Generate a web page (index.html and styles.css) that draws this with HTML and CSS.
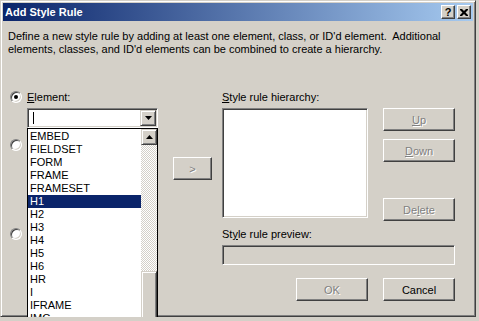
FILE: index.html
```html
<!DOCTYPE html>
<html lang="en">

<head>
    <meta charset="UTF-8">
    <meta name="viewport" content="width=device-width, initial-scale=1.0">
    <title>Add Style Rule</title>
    <link rel="stylesheet" href="styles.css">
</head>

<body>
    <div class="window">
        <div class="titlebar">
            <span class="title">Add Style Rule</span>
            <div class="caption-buttons">
                <button class="caption-btn help">?</button>
                <button class="caption-btn close">
                    <svg width="8" height="7" viewBox="0 0 8 7"><path d="M0 0h2l2 2 2-2h2v1l-2.5 2.5 2.5 2.5v1h-2l-2-2-2 2h-2v-1l2.5-2.5-2.5-2.5z" fill="#000"/></svg>
                </button>
            </div>
        </div>

        <div class="client">
            <p class="intro">Define a new style rule by adding at least one element, class, or ID'd element.&nbsp; Additional<br>elements, classes, and ID'd elements can be combined to create a hierarchy.</p>

            <div class="main">
                <div class="left-col">
                    <label class="radio-row">
                        <span class="radio checked"></span>
                        <span><u>E</u>lement:</span>
                    </label>
                    <div class="combo">
                        <span class="caret"></span>
                        <span class="combo-btn">
                            <svg width="7" height="4" viewBox="0 0 7 4"><polygon points="0,0 7,0 3.5,4" fill="#000"/></svg>
                        </span>
                    </div>

                    <!-- class and id rows sit under the open list -->
                    <div class="radio-row class-row">
                        <span class="radio"></span>
                    </div>
                    <div class="combo"></div>

                    <div class="radio-row id-row">
                        <span class="radio"></span>
                    </div>
                    <div class="combo"></div>

                    <!-- open drop-down of the Element combo -->
                    <div class="dropdown">
                        <ul class="options">
                            <li>EMBED</li>
                            <li>FIELDSET</li>
                            <li>FORM</li>
                            <li>FRAME</li>
                            <li>FRAMESET</li>
                            <li class="selected">H1</li>
                            <li>H2</li>
                            <li>H3</li>
                            <li>H4</li>
                            <li>H5</li>
                            <li>H6</li>
                            <li>HR</li>
                            <li>I</li>
                            <li>IFRAME</li>
                            <li>IMG</li>
                        </ul>
                        <div class="scrollbar">
                            <span class="scroll-btn">
                                <svg width="7" height="4" viewBox="0 0 7 4"><polygon points="3.5,0 7,4 0,4" fill="#000"/></svg>
                            </span>
                            <span class="track"></span>
                            <span class="thumb"></span>
                        </div>
                    </div>
                </div>

                <div class="mid-col">
                    <button class="btn add-btn" disabled>&gt;</button>
                </div>

                <div class="right-col">
                    <div class="label"><u>S</u>tyle rule hierarchy:</div>
                    <div class="hier-row">
                        <div class="listbox"></div>
                        <div class="side-buttons">
                            <button class="btn" disabled><u>U</u>p</button>
                            <button class="btn" disabled><u>D</u>own</button>
                            <button class="btn delete-btn" disabled>De<u>l</u>ete</button>
                        </div>
                    </div>
                    <div class="label preview-label">St<u>y</u>le rule preview:</div>
                    <div class="preview"></div>
                    <div class="footer">
                        <button class="btn" disabled>OK</button>
                        <button class="btn enabled">Cancel</button>
                    </div>
                </div>
            </div>
        </div>
    </div>
</body>

</html>
```

FILE: styles.css
```css
* {
    margin: 0;
    padding: 0;
    box-sizing: border-box;
}

body {
    background-color: #d4d0c8;
    font-family: "Liberation Sans", Arial, sans-serif;
    font-size: 11px;
    line-height: 13px;
    color: #000;
    overflow: hidden;
}

.window {
    position: relative;
    width: 476px;
    height: 317px;
    padding: 2px;
    background-color: #d4d0c8;
    border: 1px solid;
    border-color: #d4d0c8 #404040 #404040 #d4d0c8;
    box-shadow: inset 1px 1px #fff, inset -1px -1px #808080;
}

/* title bar */
.titlebar {
    display: flex;
    align-items: center;
    height: 18px;
    padding: 0 2px;
    background: linear-gradient(to right, #0a246a, #a6caf0);
}

.title {
    flex: 1;
    color: #fff;
    font-weight: bold;
    line-height: 18px;
}

.caption-buttons {
    display: flex;
    gap: 2px;
}

.caption-btn {
    display: flex;
    align-items: center;
    justify-content: center;
    width: 14px;
    height: 14px;
    background-color: #d4d0c8;
    border: 1px solid;
    border-color: #fff #404040 #404040 #fff;
    box-shadow: inset -1px -1px #808080;
    font-family: "Liberation Sans", Arial, sans-serif;
    font-size: 11px;
    font-weight: bold;
    line-height: 12px;
}

/* client area */
.client {
    padding: 9px 0 0 5px;
}

.intro {
    margin-bottom: 35px;
}

.main {
    display: flex;
    padding-left: 2px;
}

.left-col {
    position: relative;
    width: 148px;
}

.radio-row {
    display: flex;
    gap: 5px;
    height: 13px;
}

.radio {
    position: relative;
    width: 12px;
    height: 12px;
    border-radius: 50%;
    background-color: #fff;
    border: 1px solid;
    border-color: #808080 #fff #fff #808080;
    box-shadow: inset 1px 1px #404040, inset -1px -1px #d4d0c8;
}

.radio.checked::after {
    content: "";
    position: absolute;
    left: 3px;
    top: 3px;
    width: 4px;
    height: 4px;
    border-radius: 50%;
    background-color: #000;
}

.combo {
    display: flex;
    align-items: center;
    justify-content: space-between;
    width: 131px;
    height: 20px;
    margin: 4px 0 0 17px;
    background-color: #fff;
    border: 1px solid;
    border-color: #808080 #fff #fff #808080;
    box-shadow: inset 1px 1px #404040, inset -1px -1px #d4d0c8;
    padding: 1px;
}

.caret {
    width: 1px;
    height: 12px;
    margin-left: 4px;
    background-color: #000;
}

.combo-btn,
.scroll-btn {
    display: flex;
    align-items: center;
    justify-content: center;
    width: 16px;
    height: 16px;
    background-color: #d4d0c8;
    border: 1px solid;
    border-color: #d4d0c8 #404040 #404040 #d4d0c8;
    box-shadow: inset 1px 1px #fff, inset -1px -1px #808080;
}

.class-row {
    margin-top: 11px;
}

.id-row {
    margin-top: 52px;
}

/* the open list of the element combo */
.dropdown {
    position: absolute;
    left: 17px;
    top: 37px;
    width: 131px;
    height: 200px;
    display: flex;
    background-color: #fff;
    border: 1px solid #000;
}

.options {
    flex: 1;
    list-style: none;
    padding-top: 1px;
}

.options li {
    height: 13px;
    padding-left: 2px;
    line-height: 13px;
}

.options li.selected {
    background-color: #0a246a;
    color: #fff;
}

.scrollbar {
    display: flex;
    flex-direction: column;
    width: 16px;
}

.track {
    height: 126px;
    background-color: #d4d0c8;
    background-image: conic-gradient(#fff 25%, #d4d0c8 0 50%, #fff 0 75%, #d4d0c8 0);
    background-size: 2px 2px;
}

.thumb {
    flex: 1;
    background-color: #d4d0c8;
    border: 1px solid;
    border-color: #d4d0c8 #404040 #404040 #d4d0c8;
    box-shadow: inset 1px 1px #fff, inset -1px -1px #808080;
}

/* buttons */
.btn {
    width: 72px;
    height: 23px;
    background-color: #d4d0c8;
    border: 1px solid;
    border-color: #fff #404040 #404040 #fff;
    box-shadow: inset -1px -1px #808080;
    font-family: "Liberation Sans", Arial, sans-serif;
    font-size: 11px;
    color: #000;
}

.btn:disabled {
    color: #808080;
    text-shadow: 1px 1px #fff;
}

.mid-col {
    margin-left: 15px;
}

.add-btn {
    width: 39px;
    margin-top: 66px;
}

.right-col {
    margin-left: 10px;
    width: 233px;
}

.hier-row {
    display: flex;
    justify-content: space-between;
    margin-top: 4px;
}

.listbox {
    width: 146px;
    height: 110px;
    background-color: #fff;
    border: 1px solid;
    border-color: #808080 #fff #fff #808080;
    box-shadow: inset 1px 1px #404040, inset -1px -1px #d4d0c8;
}

.side-buttons {
    display: flex;
    flex-direction: column;
    gap: 8px;
}

.delete-btn {
    margin-top: 28px;
}

.preview-label {
    margin-top: 7px;
}

.preview {
    height: 20px;
    margin-top: 4px;
    border: 1px solid;
    border-color: #808080 #fff #fff #808080;
    box-shadow: inset 1px 1px #404040, inset -1px -1px #d4d0c8;
}

.footer {
    display: flex;
    justify-content: flex-end;
    gap: 15px;
    margin-top: 13px;
}
```
